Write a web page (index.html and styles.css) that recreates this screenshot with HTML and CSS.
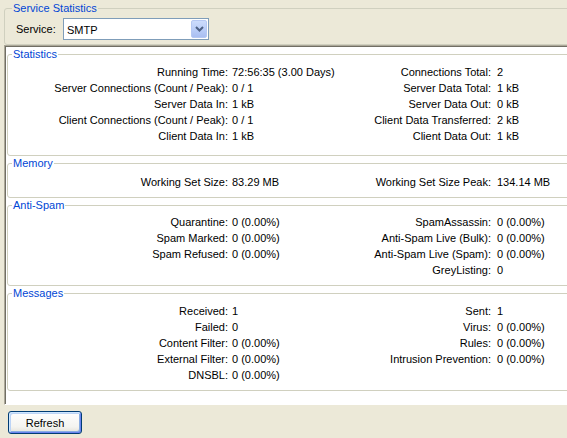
FILE: index.html
```html
<!DOCTYPE html>
<html>
<head>
<meta charset="utf-8">
<title>Service Statistics</title>
<link rel="stylesheet" href="styles.css">
</head>
<body>
<div class="window">
  <fieldset class="group outer">
    <legend>Service Statistics</legend>
    <div class="service-row">
      <span class="service-label">Service:</span>
      <div class="combo">
        <span class="combo-text">SMTP</span>
        <span class="combo-btn">
          <svg width="9" height="6" viewBox="0 0 9 6"><path d="M1 1 L4.5 4.5 L8 1" fill="none" stroke="#4D6185" stroke-width="2"/></svg>
        </span>
      </div>
    </div>
  </fieldset>

  <div class="panel">
    <fieldset class="group sec-stats">
      <legend>Statistics</legend>
      <div class="grid">
        <span class="k">Running Time:</span><span class="v">72:56:35 (3.00 Days)</span><span class="k">Connections Total:</span><span class="v">2</span>
        <span class="k">Server Connections (Count / Peak):</span><span class="v">0 / 1</span><span class="k">Server Data Total:</span><span class="v">1 kB</span>
        <span class="k">Server Data In:</span><span class="v">1 kB</span><span class="k">Server Data Out:</span><span class="v">0 kB</span>
        <span class="k">Client Connections (Count / Peak):</span><span class="v">0 / 1</span><span class="k">Client Data Transferred:</span><span class="v">2 kB</span>
        <span class="k">Client Data In:</span><span class="v">1 kB</span><span class="k">Client Data Out:</span><span class="v">1 kB</span>
      </div>
    </fieldset>

    <fieldset class="group sec-memory">
      <legend>Memory</legend>
      <div class="grid">
        <span class="k">Working Set Size:</span><span class="v">83.29 MB</span><span class="k">Working Set Size Peak:</span><span class="v">134.14 MB</span>
      </div>
    </fieldset>

    <fieldset class="group sec-spam">
      <legend>Anti-Spam</legend>
      <div class="grid">
        <span class="k">Quarantine:</span><span class="v">0 (0.00%)</span><span class="k">SpamAssassin:</span><span class="v">0 (0.00%)</span>
        <span class="k">Spam Marked:</span><span class="v">0 (0.00%)</span><span class="k">Anti-Spam Live (Bulk):</span><span class="v">0 (0.00%)</span>
        <span class="k">Spam Refused:</span><span class="v">0 (0.00%)</span><span class="k">Anti-Spam Live (Spam):</span><span class="v">0 (0.00%)</span>
        <span class="k"></span><span class="v"></span><span class="k">GreyListing:</span><span class="v">0</span>
      </div>
    </fieldset>

    <fieldset class="group sec-messages">
      <legend>Messages</legend>
      <div class="grid">
        <span class="k">Received:</span><span class="v">1</span><span class="k">Sent:</span><span class="v">1</span>
        <span class="k">Failed:</span><span class="v">0</span><span class="k">Virus:</span><span class="v">0 (0.00%)</span>
        <span class="k">Content Filter:</span><span class="v">0 (0.00%)</span><span class="k">Rules:</span><span class="v">0 (0.00%)</span>
        <span class="k">External Filter:</span><span class="v">0 (0.00%)</span><span class="k">Intrusion Prevention:</span><span class="v">0 (0.00%)</span>
        <span class="k">DNSBL:</span><span class="v">0 (0.00%)</span><span class="k"></span><span class="v"></span>
      </div>
    </fieldset>
  </div>

  <div class="footer">
    <button class="btn" type="button">Refresh</button>
  </div>
</div>
</body>
</html>
```

FILE: styles.css
```css
html, body {
  margin: 0;
  padding: 0;
}

body {
  width: 567px;
  height: 438px;
  overflow: hidden;
  background: #ECE9D8;
  font-family: "Liberation Sans", Arial, sans-serif;
  font-size: 11px;
  color: #000;
}

.window {
  width: 600px;
  padding-top: 1px;
}

.group {
  margin: 0;
  padding: 0;
  border: 1px solid #D0D0BF;
  border-radius: 3px;
  min-width: 0;
}

.group > legend {
  margin-left: 4px;
  padding: 0 1px;
  line-height: 14px;
  color: #0046D5;
  font-size: 11px;
}

.outer {
  margin-left: 4px;
}

.outer > legend {
  margin-left: 7px;
}

.service-row {
  display: flex;
  align-items: center;
  padding: 3px 0 4px 11px;
}

.service-label {
  width: 47px;
  padding-bottom: 1px;
}

.combo {
  width: 146px;
  height: 22px;
  box-sizing: border-box;
  border: 1px solid #7F9DB9;
  background: #fff;
  display: flex;
  align-items: center;
  justify-content: space-between;
}

.combo-text {
  padding-left: 3px;
  padding-top: 1px;
}

.combo-btn {
  width: 16px;
  height: 18px;
  margin-right: 1px;
  box-sizing: border-box;
  border: 1px solid #B5C8F3;
  border-radius: 2px;
  background: linear-gradient(#CCDCFC, #B7CBF7 60%, #A9BEF1);
  display: flex;
  align-items: center;
  justify-content: center;
}

.combo-btn svg {
  display: block;
}

.panel {
  margin-left: 4px;
  height: 360px;
  box-sizing: border-box;
  background: #fff;
  border-top: 1px solid #ACA899;
  border-left: 1px solid #ACA899;
  border-bottom: 1px solid #fff;
  box-shadow: inset 1px 1px 0 #716F64;
  padding: 1px 0 0 2px;
}

.grid {
  display: grid;
  grid-template-columns: 220px 122px 141px 1fr;
  grid-auto-rows: 16px;
  line-height: 16px;
  white-space: nowrap;
}

.k {
  text-align: right;
}

.v:nth-child(4n+2) {
  padding-left: 4px;
}

.v:nth-child(4n) {
  padding-left: 6px;
}

.sec-stats .grid {
  padding: 3px 0 11px;
}

.sec-memory .grid {
  padding: 4px 0 7px;
}

.sec-spam .grid {
  padding: 2px 0 7px;
}

.sec-messages .grid {
  padding: 3px 0 7px;
}

.footer {
  padding: 6px 0 0 8px;
}

.btn {
  width: 74px;
  height: 23px;
  margin: 0;
  padding: 0;
  border: 1px solid #003C74;
  border-radius: 3px;
  background: linear-gradient(#FFFFFF, #F4F4F0 70%, #E3E1D8);
  box-shadow: inset 1px 1px 0 #CEE7FF, inset -1px -1px 0 #6982EE, inset 2px 2px 0 #BCD4F6, inset -2px -2px 0 #89ADE4;
  font-family: "Liberation Sans", Arial, sans-serif;
  font-size: 11px;
  color: #000;
}
```
